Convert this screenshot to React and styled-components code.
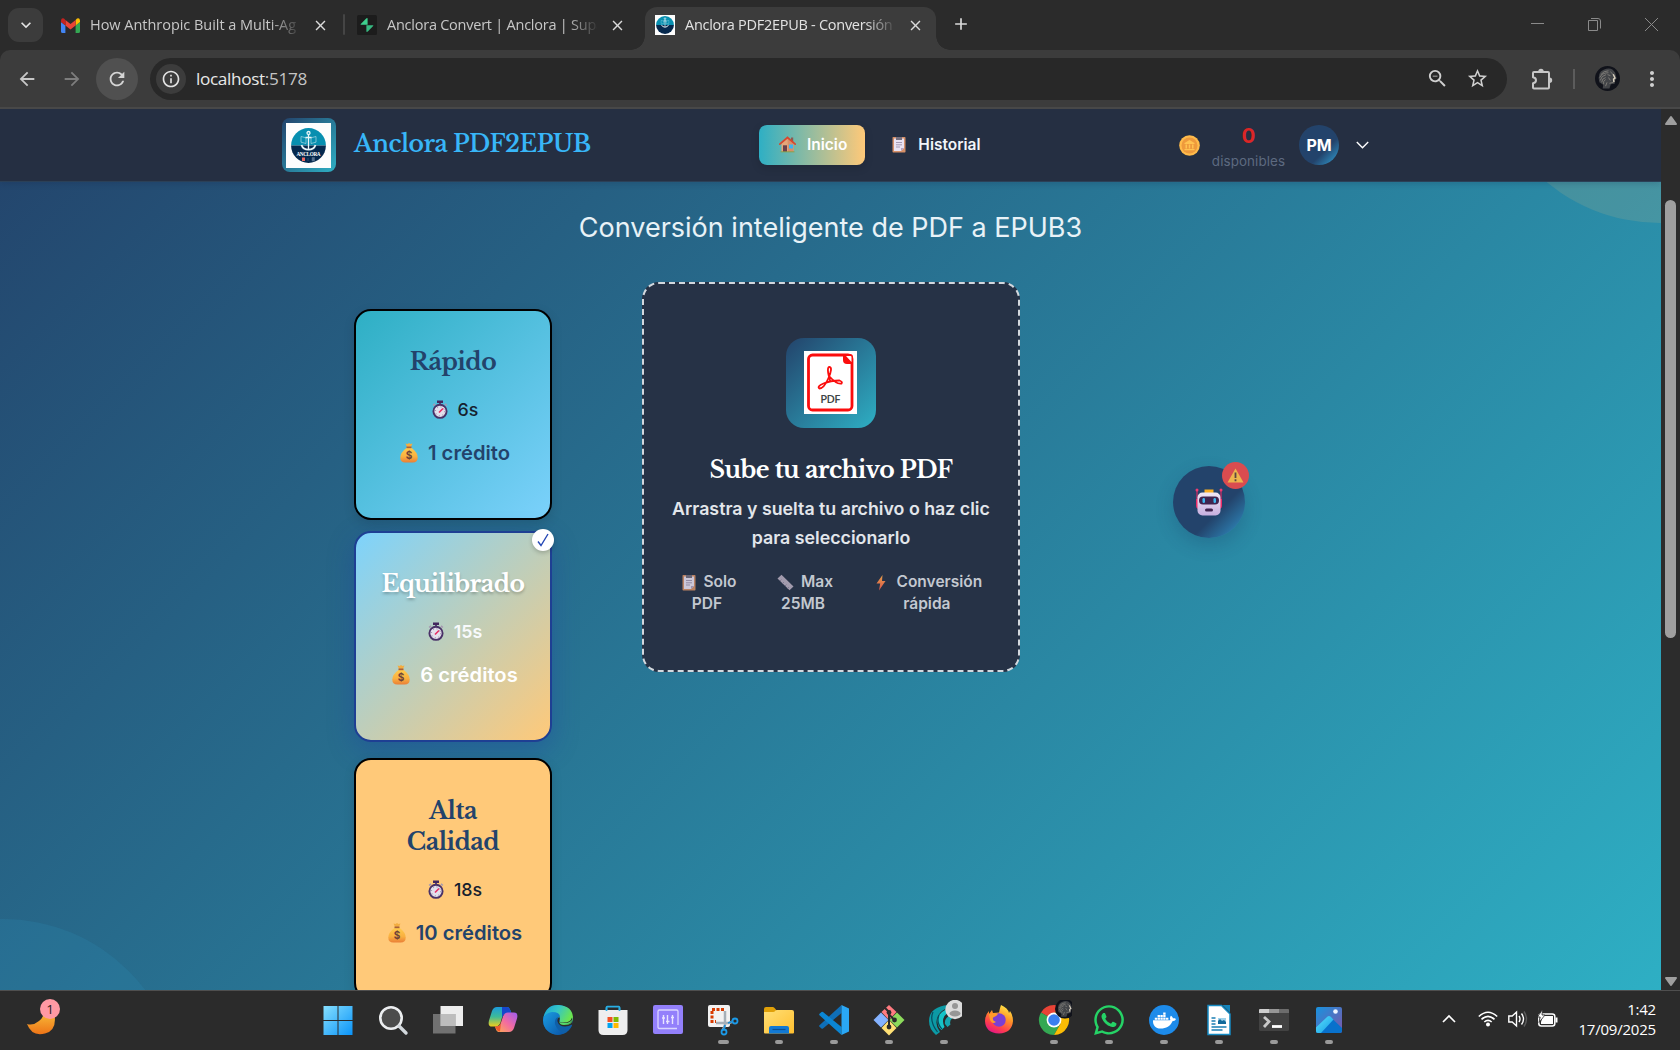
import React from "react";
import styled, { createGlobalStyle, css } from "styled-components";
import {
  MdArrowBack, MdArrowForward, MdRefresh, MdInfoOutline, MdZoomOut, MdStarOutline,
  MdMoreVert, MdAdd, MdClose, MdExpandMore,
} from "react-icons/md";
import { FaWhatsapp, FaDocker } from "react-icons/fa";

const ui = `"Segoe UI", "Open Sans", "Noto Sans", sans-serif`;
const serif = `"Libre Baskerville", "Liberation Serif", serif`;
const inter = `Inter, "Liberation Sans", sans-serif`;

const GlobalStyle = createGlobalStyle`
  * { box-sizing: border-box; }
  html, body { margin: 0; overflow: hidden; background: #2b2b2b; }
  svg { display: block; flex: none; }
`;

const Screen = styled.div`
  width: 1680px; height: 1050px; display: flex; flex-direction: column;
  overflow: hidden; font-family: ${ui};
`;

/* ---------- Browser chrome ---------- */
const TabStrip = styled.div`
  height: 50px; flex: none; display: flex; align-items: flex-start; background: #2b2b2b; padding: 7px 0 0 8px;
`;
const TabMenu = styled.div`
  width: 35px; height: 34px; margin-top: 1px; border-radius: 11px; background: #3c3c3c; color: #e3e3e3;
  display: grid; place-items: center;
`;
const Tab = styled.div`
  width: ${p => p.$w}px; height: 43px; flex: none; padding: 0 0 7px ${p => p.$pl}px; display: flex; align-items: center;
  margin-left: ${p => p.$ml || 0}px; color: #c7c7c7; position: relative;
  ${p => p.$active && css`
    background: #3c3c3c; color: #e3e3e3; border-radius: 12px 12px 0 0;
    &::before, &::after {
      content: ""; position: absolute; bottom: 0; width: 14px; height: 14px;
    }
    &::before { left: -14px; background: radial-gradient(circle at 0 0, transparent 13.5px, #3c3c3c 14px); }
    &::after { right: -14px; background: radial-gradient(circle at 100% 0, transparent 13.5px, #3c3c3c 14px); }
  `}
`;
const TabText = styled.div`
  width: 210px; flex: none; margin-left: ${p => p.$ml}px; white-space: nowrap; font-size: 14.5px;
  line-height: 22px; letter-spacing: ${p => p.$ls}px;
  mask-image: linear-gradient(90deg, #000 180px, transparent 212px);
`;
const TabClose = styled(MdClose)`margin-left: 12px; color: #dadada;`;
const TabDivider = styled.div`width: 2px; height: 21px; margin: 7px 0 0 9px; background: #454545; border-radius: 1px;`;
const NewTab = styled(MdAdd)`margin: 7px 0 0 15px; color: #dadada;`;
const WindowButtons = styled.div`
  margin: 11px 22px 0 auto; display: flex; gap: 44px; color: #8a8a8a;
`;

const ToolbarBack = styled.div`height: 59px; flex: none; background: #2b2b2b;`;
const Toolbar = styled.div`
  height: 59px; background: #3c3c3c; border-bottom: 2px solid #484848; border-radius: 10px 10px 0 0;
  display: flex; align-items: center; padding: 0 16px 0 16px; color: #c7c7c7;
`;
const Back = styled(MdArrowBack)`color: #c7c7c7;`;
const Forward = styled(MdArrowForward)`margin-left: 23px; color: #7d7d7d;`;
const ReloadButton = styled.div`
  width: 42px; height: 42px; margin-left: 13px; border-radius: 50%; background: #505050; color: #d5d5d5;
  display: grid; place-items: center;
`;
const AddressBar = styled.div`
  width: 1357px; height: 42px; flex: none; margin-left: 12px; border-radius: 21px; background: #282828; color: #d0d0d0;
  display: flex; align-items: center; padding: 0 18px 0 6px;
`;
const SiteInfo = styled.div`
  width: 30px; height: 30px; border-radius: 50%; background: #3c3c3c; display: grid; place-items: center; color: #e3e3e3;
`;
const Url = styled.div`
  margin-left: 10px; margin-right: auto; font-size: 17.2px; letter-spacing: -0.35px; color: #e8e8e8;
  span { color: #c4c4c4; }
`;
const StarIcon = styled(MdStarOutline)`margin-left: 17px;`;
const Puzzle = styled.svg`margin-left: 24px;`;
const ToolDivider = styled.div`width: 2px; height: 20px; margin: 0 20px 0 20px; background: #5c5c5c;`;
const Dots = styled(MdMoreVert)`margin-left: 20px; color: #d0d0d0;`;

/* ---------- Page ---------- */
const Viewport = styled.div`height: 881px; flex: none; display: flex;`;
const Page = styled.div`
  width: 1661px; position: relative; overflow: hidden; font-family: ${inter};
  background: linear-gradient(135deg, #23436b 0%, #2eafc4 100%);
`;
const Blob = styled.div`
  position: absolute; width: 356px; height: 356px; border-radius: 50%;
  ${p => p.$corner === "top"
    ? css`top: -242px; left: 1482px; background: #ffc979; opacity: 0.13;`
    : css`top: 810px; left: -175px; background: #2f8bb8; opacity: 0.22;`}
`;
const Header = styled.header`
  position: relative; height: 73px; background: #252f42; border-bottom: 1px solid #2b4057; display: flex; align-items: center;
  padding-left: 282px; box-shadow: 0 2px 6px rgba(15, 30, 60, 0.18);
`;
const Brand = styled.div`width: 477px; display: flex; align-items: center; gap: 18px;`;
const LogoFrame = styled.div`
  width: 54px; height: 54px; border-radius: 8px; background: linear-gradient(135deg, #23436b, #2eafc4);
  display: grid; place-items: center; padding-right: 1px;
`;
const BrandName = styled.div`
  font: 600 23.5px/36px ${serif}; letter-spacing: -0.55px; color: #38b6f8; margin-top: -2px; white-space: nowrap;
`;
const Nav = styled.nav`width: 420px; display: flex; gap: 8px;`;
const NavItem = styled.div`
  height: 40px; padding: 0 18px 2px ${p => (p.$active ? 20 : 19)}px; border-radius: 8px; display: flex; align-items: center; gap: 12px;
  font-size: 15.5px; font-weight: 600; color: #f1f5f9; white-space: nowrap;
  ${p => p.$active && css`
    gap: 11px; color: #fff; background: linear-gradient(90deg, #2eafc4, #ffc979); box-shadow: 0 3px 8px rgba(0,0,0,.15);
  `}
`;
const Credits = styled.div`
  width: 73px; margin: 4px 0 0 12px; display: flex; flex-direction: column; align-items: center;
  strong { font-size: 20.5px; line-height: 26px; font-weight: 700; color: #dc2626; }
  span { font-size: 13.4px; line-height: 22px; margin-top: 1px; color: #5d6a80; letter-spacing: 0.1px; }
`;
const Avatar = styled.div`
  width: 40px; height: 40px; margin: 0 17px 0 14px; border-radius: 50%; display: grid; place-items: center;
  background: linear-gradient(135deg, #23436b 64%, #2f8fc2 92%); color: #fff; font-size: 16px; font-weight: 700; letter-spacing: -0.2px;
`;

const Subtitle = styled.h2`
  position: relative; margin: 27px 0 0; text-align: center; font-weight: 400; font-size: 27px; line-height: 38px; color: #e8f2f7;
`;
const Workspace = styled.main`position: relative; display: flex; align-items: flex-start; gap: 90px; padding: 35px 0 0 354px;`;
const Options = styled.div`padding-top: 27px; width: 198px; display: flex; flex-direction: column;`;
const tones = {
  fast: css`background: linear-gradient(135deg, #2eafc4, #7bd1fb); border-color: #000;`,
  balanced: css`
    background: linear-gradient(135deg, #7dd3fc, #ffc979); border-color: #1e3f93;
    box-shadow: 0 8px 26px rgba(30, 64, 160, 0.38); margin: 11px 0 16px;
  `,
  quality: css`background: #ffc979; border-color: #000;`,
};
const OptionCard = styled.section`
  position: relative; height: ${p => p.$h}px; flex: none; border: 2px solid; border-radius: 17px; padding: 36px 25px 0;
  display: flex; flex-direction: column; align-items: center; text-align: center;
  box-shadow: 0 4px 12px rgba(0,0,0,.12);
  ${p => tones[p.$tone]}
`;
const OptionTitle = styled.h3`
  margin: 0; font: 700 23.5px/30.5px ${serif}; letter-spacing: -0.5px; color: ${p => (p.$light ? "#fff" : "#23436b")};
  ${p => p.$light && css`text-shadow: 0 2px 3px rgba(0,0,0,.25);`}
`;
const OptionTime = styled.div`
  margin-top: 17px; height: 30px; padding-left: 4px; display: flex; align-items: center; gap: 10px; font-size: 17.8px; white-space: nowrap;
  font-weight: ${p => (p.$light ? 600 : 500)}; color: ${p => (p.$light ? "#f8fafc" : "#16202e")};
`;
const OptionCost = styled.div`
  margin-top: 13px; height: 30px; padding-left: 4px; display: flex; align-items: center; gap: 10px; font-size: 20.2px; white-space: nowrap;
  font-weight: 600; color: ${p => (p.$light ? "#fff" : "#23436b")};
`;
const CheckBadge = styled.div`
  position: absolute; top: -4px; right: -4px; width: 22px; height: 22px; border-radius: 50%; background: #fff;
  display: grid; place-items: center; box-shadow: 0 2px 4px rgba(0,0,0,.2);
`;

const DropZone = styled.section`
  width: 378px; height: 390px; border: 2px dashed #d3d8de; border-radius: 17px; background: #263246;
  display: flex; flex-direction: column; align-items: center; padding-top: 54px; text-align: center;
`;
const PdfTile = styled.div`
  width: 90px; height: 90px; border-radius: 18px; background: linear-gradient(135deg, #23436b, #2eafc4);
  display: grid; place-items: center; padding: 0 1px 1px 0;
`;
const DropTitle = styled.h3`
  margin: 25px 0 0; font: 700 23.5px/34px ${serif}; letter-spacing: -0.55px; color: #fff; white-space: nowrap;
`;
const DropText = styled.p`margin: 7px 0 0; width: 340px; font-size: 17.8px; line-height: 29px; font-weight: 600; color: #e2e6eb;`;
const Facts = styled.div`
  display: grid; grid-template-columns: 95.500px 98.500px auto; justify-content: start; justify-items: start;
  margin: 19px 0 0; width: 299px;
`;
const Fact = styled.div`
  font-size: 15.5px; line-height: 22px; font-weight: 600; color: #c3c8d0; display: flex; flex-direction: column; align-items: center;
  white-space: nowrap;
`;
const FactTop = styled.div`display: flex; align-items: center; gap: ${p => p.$gap}px;`;
const FactEnd = styled.div`margin-right: 4px;`;

const Bot = styled.div`
  position: absolute; left: 1173px; top: 357px; width: 72px; height: 72px; border-radius: 50%; display: grid; place-items: center;
  background: linear-gradient(135deg, #23436b 63%, #2d80b2 90%); box-shadow: 0 7px 18px rgba(20,50,90,.24);
`;
const BotAlert = styled.div`
  position: absolute; right: -4px; top: -4px; width: 27px; height: 27px; border-radius: 50%; background: #d94c50;
  display: grid; place-items: center;
`;
const ScrollTrack = styled.div`
  width: 19px; background: #2c2c2c; display: flex; flex-direction: column; align-items: center; padding: 6px 0 3px 0;
`;
const ScrollThumb = styled.div`width: 11px; height: 438px; margin: 74px 0 auto; border-radius: 6px; background: #9f9f9f;`;

/* ---------- Taskbar ---------- */
const Taskbar = styled.footer`
  height: 60px; flex: none; background: #2b2b2b; border-top: 1px solid #4f4f4f; display: flex; align-items: flex-start;
  color: #fff;
`;
const Widget = styled.div`width: 310.4px; padding: 5px 0 0 24px;`;
const Apps = styled.div`display: flex;`;
const AppSlot = styled.div`width: 55.08px; padding-top: 9px; display: flex; flex-direction: column; align-items: center;`;
const Running = styled.i`width: ${p => (p.$wide ? 11 : 8)}px; height: 4px; margin-top: 0; border-radius: 2px; background: #9a9a9a;`;
const Tray = styled.div`margin-left: auto; padding: 17px 24px 0 0; display: flex; align-items: flex-start;`;
const TrayIcons = styled.div`display: flex; align-items: center; gap: 10px; margin: 1px 20px 0 0;`;
const Clock = styled.div`
  width: 78px; margin-top: -9px; text-align: right; font-size: 15px; line-height: 20px; letter-spacing: -0.2px; white-space: nowrap;
`;

/* ---------- Drawings ---------- */
const Gmail = () => (
  <svg width="19" height="15" viewBox="0 0 19 15">
    <path d="M0 2v11.5q0 1.5 1.5 1.5H4.4V7.5L0 4z" fill="#4285f4" />
    <path d="M19 2v11.5q0 1.5-1.5 1.5h-2.9V7.5L19 4z" fill="#34a853" />
    <path d="M14.6 2v5.5L19 4V2.2Q18.500 -.5 16 .6z" fill="#fbbc04" />
    <path d="M4.400 2 9.500 6l5.100-4v5.500l-5.100 4-5.100-4z" fill="#ea4335" />
    <path d="M0 2.200Q.5-.5 3 .6L4.400 2v5.500L0 4z" fill="#c5221f" />
  </svg>
);
const Supabase = () => (
  <svg width="20" height="20" viewBox="0 0 20 20">
    <rect width="20" height="20" rx="1.500" fill="#1c1c1c" />
    <path d="M10.600 3.800v6H4.200q-1 0-.4-.9l5.400-5.500q1.400-.9 1.400.4z" fill="#3ecf8e" />
    <path d="M9.400 16.200v-6h6.400q1 0 .4.900l-5.400 5.500q-1.400.9-1.400-.4z" fill="#37b981" />
  </svg>
);
const AncloraMark = ({ size, box = size, label }) => (
  <svg width={box} height={box} viewBox={label ? "-5 -5 45 45" : "-2 -2 39 39"}>
    <rect x="-5" y="-5" width="45" height="45" fill="#fdfdfd" />
    <path d="M.1 17.500a17.400 17.400 0 0 1 34.800 0z" fill="#078fb0" />
    <path d="M.1 17.500a17.400 17.400 0 0 0 34.800 0z" fill="#06294e" />
    <g fill="none" stroke="#e9f5f8" strokeWidth="1.300">
      <circle cx="17.500" cy="5" r="1.500" />
      <path d="M17.500 6.500v15.500M14.500 9.500h6" />
      <path d="M10.500 17q1.500 4.700 7 4.700t7-4.700" strokeWidth="1.800" />
      <path d="M10 8.500l5 1.300v5.700l-5-1.300zM25 8.500l-5 1.300v5.700l5-1.300z" strokeWidth=".7" opacity=".7" />
    </g>
    {label && <>
      <text x="17.500" y="28.300" textAnchor="middle" textLength="24" fontFamily="Liberation Serif" fontWeight="700" fontSize="5.200" fill="#fff">ANCLORA</text>
      <path d="M11 29.500h3v3.500h-3z" fill="#ee6a64" /><path d="M17 30v3M21 29.500h2.500v3.500H21z" fill="#56708e" stroke="#56708e" strokeWidth=".5" />
    </>}
  </svg>
);
const Portrait = ({ size }) => (
  <svg width={size} height={size} viewBox="0 0 26 26">
    <circle cx="13" cy="13" r="13" fill="#10121a" />
    <path d="M4.500 17Q2 7 9 4q8-4 12 3l1.500 6-1.500 1.500-.5 4-4 .5-1.500 4.500H8l.5-4z" fill="#424448" />
    <g fill="none" stroke="#96938c" strokeWidth=".7">
      <path d="M6 9q3-4 8-4M5 12q2-5 9-5M5.500 15q1-5 6-6M7 17q0-4 4-5M9 19q-1-3 2-5M16 6l3 3M13 9l3 1M11 21l1.500-4M15 18l4-1M14 12l2 3" />
    </g>
    <path d="M19 8.500l1.800 4-1.500 1.200.4 3" fill="none" stroke="#d9d0bf" strokeWidth="1.500" />
  </svg>
);
const House = () => (
  <svg width="17" height="17" viewBox="0 0 17 17">
    <path d="M12 1.500h2.200v5H12z" fill="#8d5a52" />
    <path d="M2.500 7.500 8.500 2l6 5.500V16h-12z" fill="#e5a679" />
    <path d="M8.500 2l6 5.500V16H9z" fill="#d98f6a" />
    <path d="M.8 8.200 8.500 1.500l7.700 6.700" fill="none" stroke="#d8472f" strokeWidth="1.700" strokeLinecap="round" />
    <path d="M4 9.300h4V16H4z" fill="#6b3f4b" /><path d="M10 8.500h4v4h-4z" fill="#3fb4f0" />
    <path d="M1.500 15.800h14" stroke="#8aa04c" strokeWidth="1" />
  </svg>
);
const Clipboard = ({ faded }) => (
  <svg width="14" height="17" viewBox="0 0 14 17" opacity={faded ? 0.85 : 1}>
    <rect x=".5" y="1" width="13" height="15.500" rx=".8" fill="#d69068" />
    <path d="M2 2.500h10v9.500l-3 3H2z" fill="#e9e2f2" /><path d="M12 12H9v3z" fill="#b3a4c4" />
    <path d="M4 1h6v3H4z" fill="#75707f" />
    <path d="M4 6.500h6M4 8.800h6M4 11h4" stroke="#a59ab4" strokeWidth="1" />
  </svg>
);
const Coin = () => (
  <svg width="21" height="21" viewBox="0 0 21 21">
    <circle cx="10.500" cy="10.500" r="10.300" fill="#ffbb4b" /><circle cx="10.500" cy="10.500" r="8" fill="#ee9a3c" />
    <path d="M5.500 8 10.500 5l5 3v1h-10zM6.500 9.500H8v4H6.500zM9.800 9.500h1.400v4H9.800zM13 9.500h1.500v4H13zM5.500 14h10v1.200h-10z" fill="#ffc250" />
  </svg>
);
const Stopwatch = () => (
  <svg width="16" height="19" viewBox="0 0 16 19">
    <path d="M5 .5h6v2.500H5z" fill="#43275e" /><path d="M7 3h2v2H7z" fill="#5d4677" />
    <path d="M1.200 5.500 3 3.800M14.800 5.500 13 3.800" stroke="#a599b1" strokeWidth="1.700" />
    <circle cx="8" cy="11.300" r="6.600" fill="#e4e0ed" stroke="#4a3268" strokeWidth="1.900" />
    <circle cx="8" cy="11.300" r="4.500" fill="none" stroke="#8d829d" strokeWidth="1" strokeDasharray="1 2.530" />
    <path d="M7 12.500l4-4" stroke="#e62d64" strokeWidth="1.600" />
  </svg>
);
const MoneyBag = () => (
  <svg width="18" height="21" viewBox="0 0 18 21">
    <defs><linearGradient id="bag" x1="0" y1="0" x2="0" y2="1"><stop stopColor="#ffcc4d" /><stop offset=".6" stopColor="#f9b040" /><stop offset="1" stopColor="#ea7f36" /></linearGradient></defs>
    <path d="M5.500 1.500 7.500 2l1.500-1 1.500 1 2-.5L11 5H7z" fill="#f3ad41" />
    <path d="M7 5.500h4.200q6.500 5 6.500 10 0 5-5 5H5.300q-5 0-5-5 0-5 6.700-10z" fill="url(#bag)" />
    <path d="M6.500 4.500h5v1.700h-5z" fill="#a9603a" />
    <text x="9" y="17.300" textAnchor="middle" fontFamily="Inter" fontWeight="700" fontSize="10" fill="#6d4238">$</text>
  </svg>
);
const Ruler = () => (
  <svg width="17" height="17" viewBox="0 0 17 17">
    <path d="M4.500.7 16.500 12.500l-4 3.800L.5 4.500z" fill="#a29bad" />
    <path d="M3 7l1.500-1.500M5.500 9.500 7 8M8 12l1.500-1.500M10.500 14.500 12 13" stroke="#77708a" strokeWidth=".8" />
  </svg>
);
const Bolt = () => (
  <svg width="10" height="17" viewBox="0 0 10 17">
    <defs><linearGradient id="bolt" x1="0" y1="0" x2="0" y2="1"><stop stopColor="#e6a048" /><stop offset="1" stopColor="#d9534c" /></linearGradient></defs>
    <path d="M6.500 1 .5 9.500h3.700L3 16.500 9.500 7H6z" fill="url(#bolt)" />
  </svg>
);
const PdfIcon = () => (
  <svg width="53" height="63" viewBox="0 0 53 63">
    <path d="M0 0h53v63H0z" fill="#fff" />
    <rect x="4.500" y="4" width="43.500" height="55" rx="4" fill="none" stroke="#fb0d0d" strokeWidth="2.800" />
    <path d="M39 3h7q3 0 3 3v7h-6q-4 0-4-4z" fill="#fb0d0d" /><path d="M42 5h4.500q1 0 1 1v5z" fill="#fff" />
    <path d="M26.200 30Q22 16 25.500 15.800 29 16.500 24.500 27T15.500 37.500q-3-2 4-5t16-3q3.500 1.500 2 3-5 1-12-7" fill="none" stroke="#fb0d0d" strokeWidth="1.800" strokeLinejoin="round" />
    <text x="26.300" y="52" textAnchor="middle" textLength="20" fontFamily="Open Sans" fontWeight="600" fontSize="11.500" fill="#3d4446">PDF</text>
  </svg>
);
const Robot = () => (
  <svg width="28" height="28" viewBox="0 0 28 28">
    <defs><linearGradient id="face" x1="0" y1="0" x2="0" y2="1"><stop stopColor="#f1e8f5" /><stop offset="1" stopColor="#c7afdf" /></linearGradient></defs>
    <path d="M2 1.500V14M26 1.500V14" stroke="#d52a65" strokeWidth="1.200" /><circle cx="2" cy="2" r="1.500" fill="#ee3b72" /><circle cx="26" cy="2" r="1.500" fill="#ee3b72" />
    <path d="M1 11h4v10H3q-2-1-2-3zM27 11h-4v10h2q2-1 2-3z" fill="#ec2d68" />
    <path d="M9.500 1.500h9V6h-9z" fill="#f9ae22" />
    <rect x="2.500" y="4.500" width="23" height="23" rx="5" fill="url(#face)" />
    <rect x="4" y="8.500" width="20" height="8" rx="4" fill="#40244f" />
    <rect x="7.500" y="10" width="2.500" height="5" rx="1.200" fill="#3eb8ee" /><rect x="18.500" y="10" width="2.500" height="5" rx="1.200" fill="#3eb8ee" />
    <rect x="10" y="20.500" width="8" height="3" rx="1.500" fill="#40244f" />
  </svg>
);
const Warning = () => (
  <svg width="17" height="15" viewBox="0 0 17 15">
    <path d="M8.500.5 16.500 14.500H.5z" fill="#edb44d" /><path d="M8.500 4.500v5.500M8.500 11.200v2" stroke="#5b4741" strokeWidth="1.800" />
  </svg>
);
const Triangle = ({ down }) => (
  <svg width="14" height="11" viewBox="0 0 14 11"><path d={down ? "M2 2h10L7 9z" : "M2 9h10L7 2z"} fill="#9f9f9f" stroke="#9f9f9f" strokeWidth="2" strokeLinejoin="round" /></svg>
);

const box = { width: 36, height: 40, viewBox: "0 0 36 40" };
const icons = {
  windows: <svg {...box}>
    <defs><linearGradient id="win" x1="0" y1="0" x2="1" y2="1"><stop stopColor="#86e0ff" /><stop offset="1" stopColor="#0a93f8" /></linearGradient></defs>
    <path d="M3.500 6h14v14h-14zM18.500 6h14v14h-14zM3.500 21h14v14h-14zM18.500 21h14v14h-14z" fill="url(#win)" />
  </svg>,
  search: <svg {...box}><circle cx="16" cy="18" r="10.700" fill="#4c4c4c" stroke="#eceef0" strokeWidth="2.600" /><path d="M24 26l7 7" stroke="#d3d8dd" strokeWidth="3.400" strokeLinecap="round" /></svg>,
  tasks: <svg {...box}><path d="M10.500 6H33v20H10.500z" fill="#ededed" /><path d="M3 14h22.500v19.500H3z" fill="#858585" opacity=".78" /><path d="M10.500 14h15v12h-15z" fill="#bdbdbd" /></svg>,
  copilot: <svg {...box}>
    <defs>
      <linearGradient id="cp1" x1="0" y1="0" x2="0" y2="1"><stop stopColor="#1c9bdc" /><stop offset=".5" stopColor="#3dbb98" /><stop offset="1" stopColor="#f0cd1b" /></linearGradient>
      <linearGradient id="cp2" x1="1" y1="0" x2="0" y2="1"><stop stopColor="#9d5cf2" /><stop offset=".5" stopColor="#f36ba0" /><stop offset="1" stopColor="#ffb24b" /></linearGradient>
    </defs>
    <path d="M12 7h10q2.500 0 3.500 3.500l1 3H21q-3 0-4 4l-1.500 5q-1.500 4-5 4H7q-4.500 0-3-6L7 11q1.500-4 5-4z" fill="url(#cp1)" />
    <path d="M17 7h5q2.500 0 3.500 3.500l1 3H21q-2 0-4 4z" fill="#1746cb" />
    <path d="M24 32H14q-2.500 0-3.500-4l-.5-1.500h2q3 0 4-4l2-6q1.500-4 5-4h6q4.500 0 3 6l-3 9.500q-1.500 4-5 4z" fill="url(#cp2)" />
    <path d="M10 26.500h2q3 0 4-4l-1 9q-3 0-4-3z" fill="#f0592c" />
  </svg>,
  edge: <svg {...box}>
    <defs>
      <linearGradient id="ed1" x1="0" y1="0" x2="1" y2=".4"><stop stopColor="#15a1d7" /><stop offset=".5" stopColor="#35c5c7" /><stop offset="1" stopColor="#6be54f" /></linearGradient>
      <linearGradient id="ed2" x1="0" y1="0" x2="1" y2="1"><stop stopColor="#1b9de2" /><stop offset="1" stopColor="#0a55a8" /></linearGradient>
    </defs>
    <circle cx="18" cy="20" r="15" fill="#0f5fa8" />
    <path d="M3 19Q6 4 19 5q13 1 14 12 0 8-9 8-5 0-5-2 2-2 0-5-3-5-9-4-6 1-7 5z" fill="url(#ed1)" />
    <path d="M3 20q1-7 9-8 8 0 8 5-6 0-5 7 2 7 9 9-5 3-11 1Q3 30 3 20z" fill="url(#ed2)" />
    <path d="M19.500 17q-2.500 1.500-2 4.500 1.500 5 7.500 5 4 0 6.500-1.800l1.500.3-1-7.500q-1.500 5-8 5-5 0-5-2 1.500-1.500.5-3.500z" fill="#2b2b2b" />
    <path d="M24 25q8 0 9-7l-.2 1.500Q32 25 24.500 25z" fill="#5edc5b" />
    <path d="M19.200 20.800q.3 2.200 5 2.200 8 0 8.800-6-1 8-9 8-5 0-4.800-4.200z" fill="#56d96c" />
  </svg>,
  store: <svg {...box}>
    <path d="M11.500 14V7.500q0-.8.800-.8h11.400q.8 0 .8.800V14" fill="none" stroke="#28afe5" strokeWidth="1.700" />
    <path d="M3.500 10h29v20q0 5-5 5h-19q-5 0-5-5z" fill="#eee" />
    <path d="M11.500 11V7.500M24.500 11V7.500" stroke="#28afe5" strokeWidth="1.700" />
    <path d="M12.500 17h5v5h-5z" fill="#f25022" /><path d="M18.500 17h5v5h-5z" fill="#7fba00" /><path d="M12.500 23h5v5h-5z" fill="#00a4ef" /><path d="M18.500 23h5v5h-5z" fill="#ffb900" />
  </svg>,
  mixer: <svg {...box}>
    <rect x="3" y="5" width="30" height="29" rx="2" fill="#9380fb" /><path d="M27 28.500H9.500q-1.500 0-1.500-1.500V11.500Q8 10 9.500 10h17q1.500 0 1.500 1.500V25" fill="none" stroke="#dad5ff" strokeWidth="1.300" />
    <path d="M13.500 15v9M17.500 15v9M22.500 15v9M12 18h3M16 21.500h3.500M21 17.500h3" stroke="#e8e4ff" strokeWidth="1.400" />
  </svg>,
  snip: <svg {...box}>
    <rect x="3" y="5" width="22" height="22" rx="2" fill="#f2f2f2" /><path d="M19 9.500H7v12h4" fill="none" stroke="#d83b01" strokeWidth="3" strokeDasharray="3 1.500" />
    <path d="M20 11v14l-2 5M11 23h13l4-1.500" fill="none" stroke="#a6afb7" strokeWidth="2.500" /><circle cx="19" cy="32" r="2.500" fill="none" stroke="#1b9ae8" strokeWidth="1.800" /><circle cx="30" cy="21" r="2.500" fill="none" stroke="#1b9ae8" strokeWidth="1.800" />
    <path d="M20 25l-1 4M23 23l4-1.500" stroke="#1b8bd2" strokeWidth="1.800" />
  </svg>,
  files: <svg {...box}>
    <defs><linearGradient id="fold" x1="0" y1="0" x2="1" y2="1"><stop stopColor="#ffdf76" /><stop offset="1" stopColor="#ffbf2f" /></linearGradient></defs>
    <path d="M3 9q0-2 2-2h7q1 0 2 1.500L16 11v5H3z" fill="#e0a008" /><path d="M3 12h9q1.500 0 2.500-1.500.5-.5 1.500-.5h15q2 0 2 2v20.500q0 1-1 1H4q-1 0-1-1z" fill="url(#fold)" />
    <path d="M8 33.500V28q0-2 2-2h16q2 0 2 2v5.500z" fill="#1279d4" /><path d="M11.500 29.500h13" stroke="#0b4f93" strokeWidth="1.200" />
  </svg>,
  code: <svg {...box}>
    <path d="M25.500 5v8L7 28.500q-.8.6-1.500 0l-2-1.800q-.8-.8 0-1.500z" fill="#0f6fb8" />
    <path d="M25.500 35v-8L7 12q-.8-.6-1.500 0l-2 1.800q-.8.800 0 1.500z" fill="#0b86d4" /><path d="M25.500 5 33 8.500v23L25.500 35V27V13z" fill="#2aa7f5" />
  </svg>,
  git: <svg {...box}>
    <path d="M18 5l7.500 7-7.500 8-7.500-8z" fill="#ff7b80" /><path d="M26 12.500l7.500 7.500-7.500 7.500L18.500 20z" fill="#8ddb5c" /><path d="M18 20l7.500 8-7.500 7.500-7.500-7.500z" fill="#ffe075" /><path d="M10 12.500l7.500 7.500-7.500 7.500L2.500 20z" fill="#84b2ff" />
    <path d="M13.500 7.500 18 12v15M18 14.500l5 5" fill="none" stroke="#2b2b2b" strokeWidth="2" /><circle cx="18" cy="12.500" r="2.400" fill="#2b2b2b" /><circle cx="18" cy="27" r="2.400" fill="#2b2b2b" /><circle cx="23.500" cy="20" r="2.400" fill="#2b2b2b" />
  </svg>,
  waves: <svg {...box}>
    <path d="M22 5Q3 7 3 21q0 8 7 14l4-3Q8 24 12 16q3-6 10-8z" fill="#0c9aa5" />
    <path d="M24 8q-13 4-12.500 14 .5 5 4 8l3-3q-3-6 0-11 2-3 6-5z" fill="#16c3c7" />
    <path d="M26 15q-8 2-7 9l2.500 3 3-2.500q-1.500-4 2.500-7z" fill="#15a7b0" />
    <path d="M7 12q-4 9 4.500 20M13 15q-3 8 3 14" stroke="#064c60" strokeWidth="1.200" fill="none" />
    <circle cx="29" cy="9.500" r="9.700" fill="#dcdcdc" /><circle cx="29" cy="6" r="3" fill="#969696" /><ellipse cx="29" cy="13.500" rx="5.500" ry="3" fill="#969696" />
  </svg>,
  firefox: <svg {...box}>
    <defs><linearGradient id="ff" x1=".8" y1="0" x2=".3" y2="1"><stop stopColor="#fff04a" /><stop offset=".4" stopColor="#ff9627" /><stop offset=".75" stopColor="#ff3f4c" /><stop offset="1" stopColor="#e41586" /></linearGradient></defs>
    <path d="M20 5q7 3 8 8l1-2q3 4 3 10-1 12-14 12.500Q4.500 33 4 21q0-6 4-10v3l3-4 1 3 6-.5q1-5 2-7.500z" fill="url(#ff)" />
    <circle cx="18" cy="20" r="6.700" fill="#7b3fd3" /><path d="M8 14q4-2 9 0-2 3-5 3.500-1 3 3 4.500Q9 26 8 14z" fill="#ff9b2a" />
  </svg>,
  chrome: <svg {...box}>
    <path d="M18 20 5 12.500A15 15 0 0 1 31 12.500H18z" fill="#e84336" /><path d="M18 20 5 12.500A15 15 0 0 0 18 35l6.500-11.300z" fill="#34a853" /><path d="M18 20l6.500 3.700L18 35A15 15 0 0 0 31 12.500H18z" fill="#fbbc05" />
    <circle cx="18" cy="20" r="7.400" fill="#fff" /><circle cx="18" cy="20" r="5.800" fill="#3a7ff0" />
    <g transform="translate(19 -1) scale(.76)"><Portrait size={26} /></g>
  </svg>,
  whatsapp: <svg {...box}><g transform="translate(1 3)"><FaWhatsapp size={34} color="#25d366" /></g></svg>,
  docker: <svg {...box}><circle cx="18" cy="20" r="15" fill="#1d8bea" /><g transform="translate(7 9)"><FaDocker size={23} color="#fff" /></g></svg>,
  writer: <svg {...box}>
    <path d="M7 5.500h13.500L29 14v20.500H7z" fill="#fff" stroke="#168bc4" strokeWidth="1.500" /><path d="M21.500 5H29v7.500z" fill="#1484bb" />
    <path d="M10.500 18h4M10.500 21h4M10.500 24h4M10.500 27h15M10.500 30h11" stroke="#1b7fb4" strokeWidth="1.300" /><path d="M17 18h8v6h-8z" fill="#9fd2ea" /><path d="M17 24v-3l2-2 2 2 2-1 2 2v2z" fill="#126a9b" />
  </svg>,
  terminal: <svg {...box}>
    <rect x="3" y="9" width="30" height="22" rx="1.500" fill="#424242" /><path d="M3 13v-3q0-1 1-1h9v4z" fill="#cecece" /><path d="M13 9h10v4H13z" fill="#979797" /><path d="M23 9h9q1 0 1 1v3H23z" fill="#6c6c6c" />
    <path d="M8 17l5 4.500L8 27" fill="none" stroke="#c9c9c9" strokeWidth="2.800" /><path d="M16 26.500h10" stroke="#fff" strokeWidth="2.800" />
  </svg>,
  photos: <svg {...box}>
    <defs><linearGradient id="ph" x1="0" y1="0" x2="1" y2="1"><stop stopColor="#1793df" /><stop offset="1" stopColor="#7f55a8" /></linearGradient><linearGradient id="mt" x1="0" y1="0" x2="1" y2="1"><stop stopColor="#5be2fb" /><stop offset="1" stopColor="#129ae6" /></linearGradient></defs>
    <rect x="5" y="7" width="26" height="26" rx="2" fill="url(#ph)" /><circle cx="24.500" cy="11.500" r="2.300" fill="#eef5ff" />
    <path d="M5 29 16 17.500q2-2 4 0L31 28v3q0 2-2 2H7q-2 0-2-2z" fill="#0871cc" /><path d="M5 27.500 16 17q2-2 4 0l2.500 2.500L10 33H7q-2 0-2-2z" fill="url(#mt)" />
  </svg>,
};
const taskbarApps = [
  ["windows"], ["search"], ["tasks"], ["copilot"], ["edge"], ["store"], ["mixer"], ["snip", "wide"], ["files", "on"], ["code", "on"],
  ["git", "on"], ["waves", "on"], ["firefox"], ["chrome", "on"], ["whatsapp", "on"], ["docker", "on"], ["writer", "on"], ["terminal", "on"], ["photos", "on"],
];

const Moon = () => (
  <svg width="38" height="42" viewBox="0 0 38 42">
    <defs><linearGradient id="moon" x1="0" y1="0" x2="0" y2="1"><stop stopColor="#f8bd3a" /><stop offset="1" stopColor="#ee7417" /></linearGradient></defs>
    <path d="M3 28q6 2 12-3 5-4 5-9h10q4 18-9 21.500Q8 41 3 28z" fill="url(#moon)" />
    <circle cx="26" cy="13" r="10" fill="#ff99a4" />
    <text x="26" y="18" textAnchor="middle" fontFamily="Open Sans" fontSize="13.500" fill="#2a1a1c">1</text>
  </svg>
);

const options = [
  { tone: "fast", h: 211, title: "Rápido", time: "6s", cost: "1 crédito" },
  { tone: "balanced", h: 211, title: "Equilibrado", time: "15s", cost: "6 créditos", selected: true },
  { tone: "quality", h: 242, title: "Alta Calidad", time: "18s", cost: "10 créditos" },
];

export default function App() {
  return (
    <Screen>
      <GlobalStyle />
      <TabStrip>
        <TabMenu><MdExpandMore size={20} /></TabMenu>
        <Tab $w={291} $pl={18}><Gmail /><TabText $ml={10} $ls={-0.03}>How Anthropic Built a Multi-Ag</TabText><TabClose size={17} /></Tab>
        <TabDivider />
        <Tab $w={290} $pl={12}><Supabase /><TabText $ml={10} $ls={-0.24}>Anclora Convert | Anclora | Supa</TabText><TabClose size={17} /></Tab>
        <Tab $w={291} $pl={10} $ml={10} $active><AncloraMark size={20} /><TabText $ml={10} $ls={-0.27}>Anclora PDF2EPUB - Conversión</TabText><TabClose size={17} /></Tab>
        <NewTab size={20} />
        <WindowButtons>
          <svg width="13" height="13" viewBox="0 0 13 13"><path d="M0 5.500h13" stroke="currentColor" /></svg>
          <svg width="13" height="13" viewBox="0 0 13 13"><path d="M.5 2.500h9v10h-9zM3 .5h7q2.500 0 2.500 2.500v7.500" fill="none" stroke="currentColor" /></svg>
          <svg width="13" height="13" viewBox="0 0 13 13"><path d="M0 0l13 13M13 0 0 13" stroke="currentColor" /></svg>
        </WindowButtons>
      </TabStrip>
      <ToolbarBack>
        <Toolbar>
          <Back size={22} />
          <Forward size={22} />
          <ReloadButton><MdRefresh size={22} /></ReloadButton>
          <AddressBar>
            <SiteInfo><MdInfoOutline size={20} /></SiteInfo>
            <Url>localhost<span>:5178</span></Url>
            <MdZoomOut size={23} />
            <StarIcon size={23} />
          </AddressBar>
          <Puzzle width="22" height="22" viewBox="0 0 22 22">
            <path d="M2 5q0-1 1-1h14q1 0 1 1v14.500q0 1-1 1H3q-1 0-1-1v-4.300q3-.5 3-3t-3-3z" fill="none" stroke="#c7c7c7" strokeWidth="2" strokeLinejoin="round" />
            <path d="M7.300 3.500a2.700 2.700 0 0 1 5.400 0zM18.500 9.500a2.700 2.700 0 0 1 0 5.400z" fill="#c7c7c7" />
          </Puzzle>
          <ToolDivider />
          <Portrait size={25} />
          <Dots size={24} />
        </Toolbar>
      </ToolbarBack>

      <Viewport>
        <Page>
          <Blob $corner="top" />
          <Blob $corner="bottom" />
          <Header>
            <Brand>
              <LogoFrame><AncloraMark size={35} box={45} label /></LogoFrame>
              <BrandName>Anclora PDF2EPUB</BrandName>
            </Brand>
            <Nav>
              <NavItem $active><House />Inicio</NavItem>
              <NavItem><Clipboard />Historial</NavItem>
            </Nav>
            <Coin />
            <Credits><strong>0</strong><span>disponibles</span></Credits>
            <Avatar>PM</Avatar>
            <svg width="13" height="8" viewBox="0 0 13 8"><path d="M.8 1l5.700 5.800L12.200 1" fill="none" stroke="#fff" strokeWidth="1.400" /></svg>
          </Header>
          <Subtitle>Conversión inteligente de PDF a EPUB3</Subtitle>
          <Workspace>
            <Options>
              {options.map(o => (
                <OptionCard key={o.tone} $tone={o.tone} $h={o.h}>
                  {o.selected && <CheckBadge><svg width="12" height="14" viewBox="0 0 12 14"><path d="M1 8.500l3 4L11 1" fill="none" stroke="#2447b5" strokeWidth="1.400" /></svg></CheckBadge>}
                  <OptionTitle $light={o.selected}>{o.title}</OptionTitle>
                  <OptionTime $light={o.selected}><Stopwatch />{o.time}</OptionTime>
                  <OptionCost $light={o.selected}><MoneyBag />{o.cost}</OptionCost>
                </OptionCard>
              ))}
            </Options>
            <DropZone>
              <PdfTile><PdfIcon /></PdfTile>
              <DropTitle>Sube tu archivo PDF</DropTitle>
              <DropText>Arrastra y suelta tu archivo o haz clic para seleccionarlo</DropText>
              <Facts>
                <Fact><FactTop $gap={8}><Clipboard faded />Solo</FactTop><FactEnd>PDF</FactEnd></Fact>
                <Fact><FactTop $gap={7}><Ruler />Max</FactTop><FactEnd>25MB</FactEnd></Fact>
                <Fact><FactTop $gap={11}><Bolt />Conversión</FactTop><FactEnd>rápida</FactEnd></Fact>
              </Facts>
            </DropZone>
          </Workspace>
          <Bot><Robot /><BotAlert><Warning /></BotAlert></Bot>
        </Page>
        <ScrollTrack><Triangle /><ScrollThumb /><Triangle down /></ScrollTrack>
      </Viewport>

      <Taskbar>
        <Widget><Moon /></Widget>
        <Apps>
          {taskbarApps.map(([name, state]) => (
            <AppSlot key={name}>{icons[name]}{state && <Running $wide={state === "wide"} />}</AppSlot>
          ))}
        </Apps>
        <Tray>
          <TrayIcons>
            <svg width="26" height="20" viewBox="0 0 26 20"><path d="M1 13l6-6 6 6" fill="none" stroke="#fff" strokeWidth="1.700" /></svg>
            <svg width="20" height="16" viewBox="0 0 20 16" fill="none" stroke="#fff" strokeWidth="1.600"><path d="M.8 5.500q9.200-8.500 18.400 0M3.500 8.300q6.500-6 13 0M6.300 11q3.700-3.400 7.400 0" /><circle cx="10" cy="13.500" r="1.200" fill="#fff" /></svg>
            <svg width="20" height="18" viewBox="0 0 20 18" fill="none" stroke="#fff" strokeWidth="1.400"><path d="M.8 6h3.400L8.500 2v14l-4.300-4H.8zM11 6q2 3 0 6M13.500 3.500q4 5.500 0 11" /><path d="M16 1.500q5 7.500 0 15" stroke="#5c5c5c" /></svg>
            <svg width="20" height="18" viewBox="0 0 20 18"><rect x=".8" y="4" width="16" height="12" rx="2.500" fill="none" stroke="#fff" strokeWidth="1.500" /><path d="M5 6h10v8H3v-2z" fill="#fff" /><path d="M17.500 7.500h2v5h-2z" fill="#fff" /><path d="M4.500-.5-.5 7h2.700L1 12.500 7 5H4z" fill="#fff" stroke="#2b2b2b" strokeWidth=".8" /></svg>
          </TrayIcons>
          <Clock>1:42<br />17/09/2025</Clock>
        </Tray>
      </Taskbar>
    </Screen>
  );
}
